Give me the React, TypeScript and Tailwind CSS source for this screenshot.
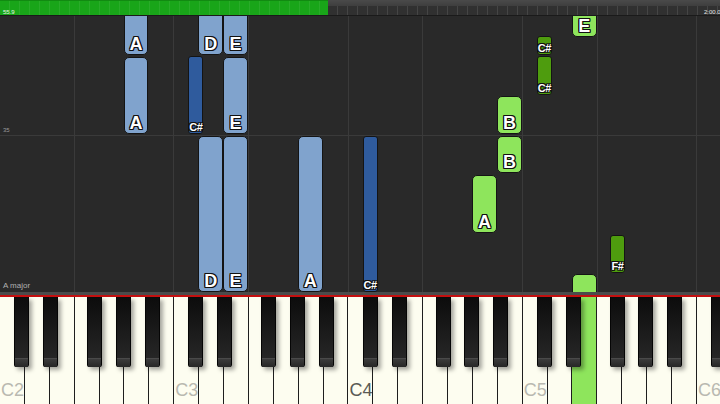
import React from "react";

// geometry of the keyboard (C2 .. D6), all in px
const KEY_W = 24.9;
const X0 = -1;
const OCTAVE = KEY_W * 7;
const whiteX = (i: number) => X0 + i * KEY_W;
// offsets of the sharps from the C of their octave
const SHARPS = [15, 44, 88, 116.5, 145.5];
const blackX = (octave: number, n: number) => X0 + octave * OCTAVE + SHARPS[n];

type Tone = "blue" | "navy" | "green" | "olive";

type Note = {
  x: number;
  w: number;
  top: number;
  bottom: number;
  label?: string;
  tone: Tone;
};

const toneClass: Record<Tone, string> = {
  blue: "bg-[#80a3cd] rounded-[5px]",
  navy: "bg-[#2f5b9d] rounded-[3px]",
  green: "bg-[#8ee55c] rounded-[5px]",
  olive: "bg-[#4e9c0e] rounded-[3px]",
};

const w = (i: number) => ({ x: whiteX(i), w: KEY_W });
const b = (o: number, n: number) => ({ x: blackX(o, n), w: 15 });

// y values are relative to the roll (which starts at y=16)
const notes: Note[] = [
  { ...w(5), top: -20, bottom: 39, label: "A", tone: "blue" },
  { ...w(5), top: 41, bottom: 118, label: "A", tone: "blue" },
  { ...w(8), top: -20, bottom: 39, label: "D", tone: "blue" },
  { ...w(9), top: -20, bottom: 39, label: "E", tone: "blue" },
  { ...w(9), top: 41, bottom: 118, label: "E", tone: "blue" },
  { ...b(1, 0), top: 40, bottom: 118, label: "C#", tone: "navy" },
  { ...w(8), top: 120, bottom: 276, label: "D", tone: "blue" },
  { ...w(9), top: 120, bottom: 276, label: "E", tone: "blue" },
  { ...w(12), top: 120, bottom: 276, label: "A", tone: "blue" },
  { ...b(2, 0), top: 120, bottom: 276, label: "C#", tone: "navy" },
  { ...w(20), top: 80, bottom: 118, label: "B", tone: "green" },
  { ...w(20), top: 120, bottom: 157, label: "B", tone: "green" },
  { ...w(19), top: 159, bottom: 217, label: "A", tone: "green" },
  { ...w(23), top: -20, bottom: 21, label: "E", tone: "green" },
  { ...w(23), top: 258, bottom: 290, tone: "green" },
  { ...b(3, 0), top: 20, bottom: 39, label: "C#", tone: "olive" },
  { ...b(3, 0), top: 40, bottom: 79, label: "C#", tone: "olive" },
  { ...b(3, 2), top: 219, bottom: 257, label: "F#", tone: "olive" },
];

const outline =
  "[text-shadow:-1px_0_#111,1px_0_#111,0_-1px_#111,0_1px_#111,-1px_-1px_#111,1px_1px_#111,-1px_1px_#111,1px_-1px_#111]";

const whiteNames = ["C", "D", "E", "F", "G", "A", "B"];
const LIT_KEY = 23; // E5 is being played

export default function App() {
  const whites = [...Array(30)].map((_, i) => i);
  const gridLines = whites.filter((i) => i % 7 === 0 || i % 7 === 3);

  return (
    <div className="w-[720px] h-[404px] overflow-hidden bg-[#292929] flex flex-col font-['Liberation_Sans',Arial,sans-serif] select-none">
      {/* progress bar */}
      <div className="relative h-[16px] flex shrink-0 border-b border-[#1a1a1a]">
        <div className="w-[328px] h-full bg-[#19a519] flex flex-col">
          <div className="h-px bg-[#128a12]" />
          <div className="flex-1 bg-[repeating-linear-gradient(90deg,transparent_0_9px,rgba(255,255,255,0.07)_9px_10px)]" />
        </div>
        <div className="flex-1 h-full flex flex-col">
          <div className="h-[6px] bg-gradient-to-b from-[#4a4a4a] to-[#3e3e3e]" />
          <div className="flex-1 bg-[#303030] bg-[repeating-linear-gradient(90deg,transparent_0_9px,#454545_9px_10px)]" />
        </div>
        <span className="absolute left-[3px] top-[9px] text-[6px] leading-none text-white/90">55.9</span>
        <span className="absolute left-[704px] top-[9px] text-[6px] leading-none text-white/90 whitespace-nowrap">2:00.0</span>
      </div>

      {/* falling notes */}
      <div className="relative h-[276px] shrink-0 overflow-hidden bg-[#292929]">
        {gridLines.map((i) => (
          <div
            key={i}
            className="absolute top-0 bottom-0 w-px bg-[#3a3a3a]"
            style={{ left: whiteX(i) }}
          />
        ))}
        <div className="absolute left-0 right-0 top-[119px] h-px bg-[#3a3a3a]" />
        <span className="absolute left-[3px] top-[111px] text-[6px] leading-none text-[#9a9a9a]">35</span>
        <span className="absolute left-[3px] top-[266px] text-[8px] leading-none text-[#b0b0b0]">A major</span>

        {notes.map((n, i) => (
          <div
            key={i}
            className={`absolute border border-[#141414] flex flex-col items-center justify-end ${toneClass[n.tone]}`}
            style={{ left: n.x, width: n.w, top: n.top, height: n.bottom - n.top }}
          >
            {n.label && (
              <span
                className={
                  n.label.length > 1
                    ? `text-white font-bold text-[11px] leading-[10px] tracking-[-0.5px] mb-[1px] ${outline}`
                    : `text-white font-bold text-[18px] leading-[14px] mb-[3px] ${outline}`
                }
              >
                {n.label}
              </span>
            )}
          </div>
        ))}
      </div>

      {/* hit line */}
      <div className="h-[3px] shrink-0 bg-[#4b4b4b]" />
      <div className="h-[2px] shrink-0 bg-[#c40f0f]" />

      {/* keyboard */}
      <div className="relative flex-1 overflow-hidden">
        <div className="flex h-full -ml-px">
          {whites.map((i) => {
            const name = whiteNames[i % 7];
            const isC = name === "C";
            const lit = i === LIT_KEY;
            return (
              <div
                key={i}
                className={`w-[24.9px] shrink-0 h-full border-l border-[#1e1e1e] flex flex-col justify-end ${
                  lit ? "bg-[#8ee55c]" : "bg-[#fdfdf0]"
                }`}
              >
                {isC && (
                  <span
                    className={`text-[18px] leading-none pl-[1px] pb-[5px] whitespace-nowrap ${
                      i === 14 ? "text-[#5a5a55]" : "text-[#b9b9b0]"
                    }`}
                  >
                    {name}
                    {2 + Math.floor(i / 7)}
                  </span>
                )}
              </div>
            );
          })}
        </div>

        {[0, 1, 2, 3, 4].flatMap((o) =>
          SHARPS.map((_, n) => (
            <div
              key={`${o}-${n}`}
              className="absolute top-0 w-[15px] h-[70px] flex flex-col rounded-b-[2px] shadow-[3px_3px_4px_rgba(0,0,0,0.35)] bg-gradient-to-b from-[#0c0c0c] via-[#1b1b1b] to-[#2a2a2a] border-x border-[#050505]"
              style={{ left: blackX(o, n) }}
            >
              <div className="flex-1" />
              <div className="h-[9px] bg-gradient-to-b from-[#3c3c3c] to-[#262626] border-t border-[#4a4a4a]" />
            </div>
          ))
        )}
      </div>
    </div>
  );
}
